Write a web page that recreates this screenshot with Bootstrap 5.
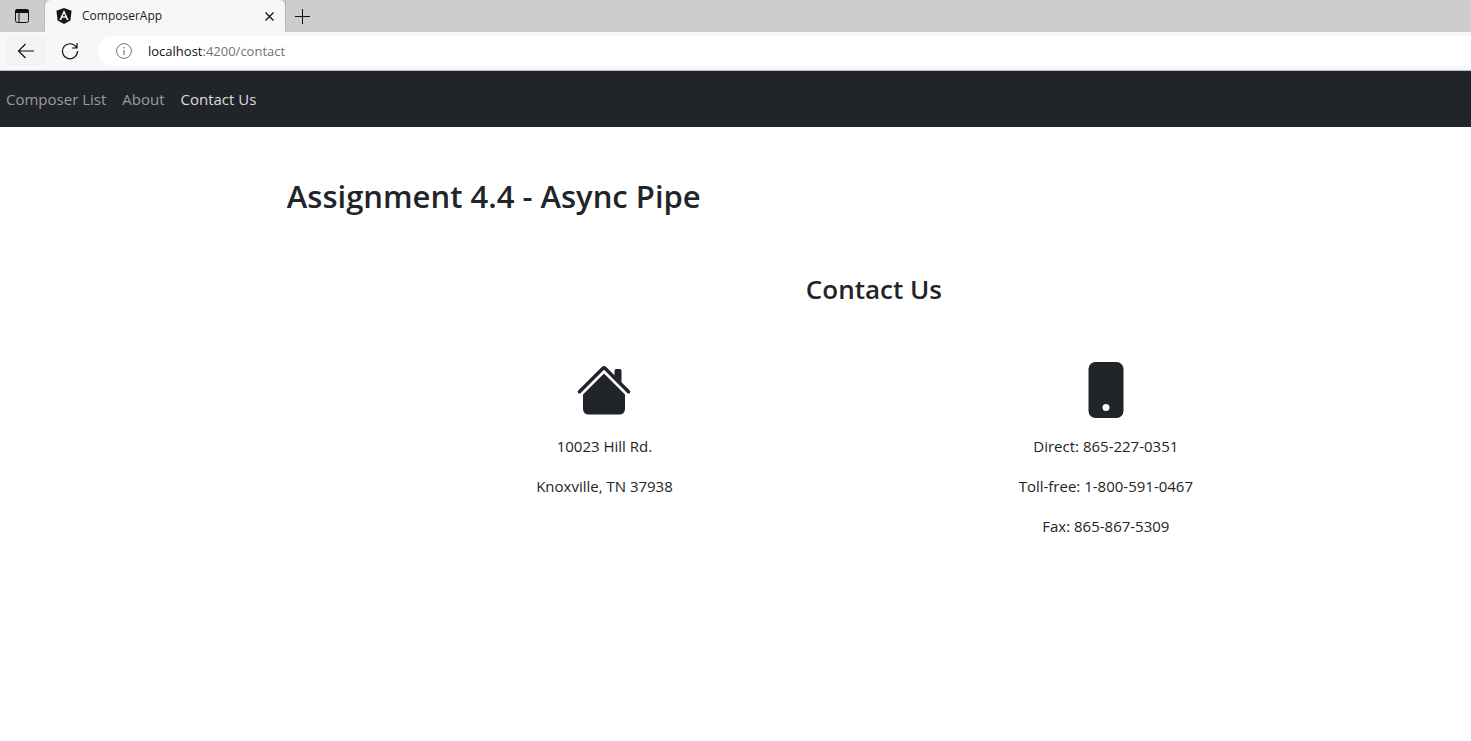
<!DOCTYPE html>
<html lang="en">
<head>
<meta charset="utf-8">
<meta name="viewport" content="width=device-width, initial-scale=1">
<title>ComposerApp</title>
<link href="https://cdn.jsdelivr.net/npm/bootstrap@5.3.0/dist/css/bootstrap.min.css" rel="stylesheet">
<style>
body { font-family: "Open Sans", "Noto Sans", sans-serif; font-size: 15px; line-height: 24px; }
svg { display: block; }
.tab-strip { background: #cdcdcd; height: 32px; }
.strip-btn { background: none; border: 0; padding: 0; color: #111; }
.tab-menu { width: 45px; height: 32px; border-bottom-right-radius: 4px; border-right: 1px solid #bdbdbd; }
.browser-tab { width: 240px; background: #f7f7f7; border-radius: 6px 6px 0 0; font-size: 12px; color: #1b1b1b; padding: 0 10px 0 11px; gap: 10px; }
.new-tab { width: 34px; border-left: 1px solid #b4b4b4; border-bottom-left-radius: 4px; }
.toolbar { background: #f7f7f7; height: 39px; padding: 4px 0 4px 6px; border-bottom: 1px solid #b9bdbd; }
.tool-btn { width: 40px; height: 30px; border-radius: 3px; }
.tool-btn.shaded { background: #f3f3f3; }
.address { background: #fff; height: 30px; margin-left: 8px; padding-left: 18px; border-radius: 15px 0 0 15px; font-size: 13px; color: #111; }
.address a { color: #111; }
.address .path { color: #737373; }
.site-nav { height: 56px; padding: 0 6px; background: #212529; }
.site-nav .nav-link { padding: 8px 0; color: rgba(255,255,255,.55); }
.site-nav .nav-link.active { color: rgba(255,255,255,.85); }
.page { margin-left: 19.5%; padding: 48px 10px 0 0; }
.page-title { font-size: 31px; line-height: 42px; font-weight: 600; margin-bottom: 54px; }
.section-title { font-size: 26px; line-height: 36px; font-weight: 600; margin-bottom: 55px; }
.contact-row { margin: 0 8.9% 0 5.7%; }
.contact-row svg { margin: 0 auto 16px; }
</style>
</head>
<body>
<header>
  <div class="tab-strip d-flex">
    <button class="strip-btn tab-menu d-flex align-items-center justify-content-center" aria-label="Tab actions">
      <svg width="14" height="14" viewBox="0 0 14 14"><rect x=".5" y=".5" width="13" height="13" rx="2" fill="none" stroke="#111"/><path d="M0 4V2.5A2.5 2.5 0 0 1 2.500 0h9A2.500 2.500 0 0 1 14 2.500V4Z" fill="#111"/><path d="M4 4v9.500" stroke="#111"/></svg>
    </button>
    <div class="browser-tab d-flex align-items-center">
      <svg width="16" height="16" viewBox="0 0 16 16"><path d="M8 0 15.600 2.700 14.400 12.400 8 16 1.600 12.400.4 2.700Z" fill="#111820"/><path d="M8 2 3.400 12h1.800l.9-2.300h3.800l.9 2.300h1.800Zm0 3.400L9.300 8.300H6.700Z" fill="#f7f7f7" fill-rule="evenodd"/></svg>
      <span class="flex-grow-1">ComposerApp</span>
      <button class="strip-btn" aria-label="Close tab"><svg width="11" height="11" viewBox="0 0 11 11"><path d="m1.500 1.500 8 8m0-8-8 8" stroke="#111" stroke-width="1.300"/></svg></button>
    </div>
    <button class="strip-btn new-tab d-flex align-items-center justify-content-center" aria-label="New tab"><svg width="15" height="15" viewBox="0 0 15 15"><path d="M7.500 0v15M0 7.500h15" stroke="#111"/></svg></button>
  </div>
  <div class="toolbar d-flex">
    <button class="strip-btn tool-btn shaded d-flex align-items-center justify-content-center" aria-label="Back"><svg width="18" height="16" viewBox="0 0 18 16"><path d="M17 8H1.500M8.500 1l-7 7 7 7" fill="none" stroke="#111" stroke-width="1.200"/></svg></button>
    <button class="strip-btn tool-btn d-flex align-items-center justify-content-center ms-1" aria-label="Refresh"><svg width="18" height="18" viewBox="0 0 18 18"><path d="M15.500 5.500A7.500 7.500 0 1 0 16.500 9M16 1v5h-5" fill="none" stroke="#111" stroke-width="1.200"/></svg></button>
    <div class="address d-flex align-items-center flex-grow-1">
      <svg class="me-3" width="16" height="16" viewBox="0 0 16 16"><circle cx="8" cy="8" r="7.400" fill="none" stroke="#777"/><path d="M8 7v5M8 4v1.500" stroke="#777" stroke-width="1.200"/></svg>
      <a class="text-decoration-none" href="#">localhost<span class="path">:4200/contact</span></a>
    </div>
  </div>
</header>
<nav class="site-nav d-flex align-items-center gap-3">
  <a class="nav-link" href="#">Composer List</a>
  <a class="nav-link" href="#">About</a>
  <a class="nav-link active" href="#" aria-current="page">Contact Us</a>
</nav>
<main class="page">
  <h1 class="page-title">Assignment 4.4 - Async Pipe</h1>
  <h2 class="section-title text-center">Contact Us</h2>
  <div class="row g-0 text-center contact-row">
    <div class="col-6">
      <svg width="56" height="56" viewBox="0 0 16 16" fill="#212529"><path d="m8 3.293 6 6V13.500a1.500 1.500 0 0 1-1.500 1.500h-9A1.500 1.500 0 0 1 2 13.500V9.293l6-6zm5-.793V6l-2-2V2.500a.5.5 0 0 1 .5-.5h1a.5.5 0 0 1 .5.5z"/><path d="M7.293 1.500a1 1 0 0 1 1.414 0l6.647 6.646a.5.5 0 0 1-.708.708L8 2.207 1.354 8.854a.5.5 0 1 1-.708-.708L7.293 1.500z"/></svg>
      <p>10023 Hill Rd.</p>
      <p>Knoxville, TN 37938</p>
    </div>
    <div class="col-6">
      <svg width="56" height="56" viewBox="0 0 16 16" fill="#212529"><path d="M3 2a2 2 0 0 1 2-2h6a2 2 0 0 1 2 2v12a2 2 0 0 1-2 2H5a2 2 0 0 1-2-2V2zm6 11a1 1 0 1 0-2 0 1 1 0 0 0 2 0z"/></svg>
      <p>Direct: 865-227-0351</p>
      <p>Toll-free: 1-800-591-0467</p>
      <p>Fax: 865-867-5309</p>
    </div>
  </div>
</main>
<script src="https://cdn.jsdelivr.net/npm/bootstrap@5.3.0/dist/js/bootstrap.bundle.min.js"></script>
</body>
</html>
